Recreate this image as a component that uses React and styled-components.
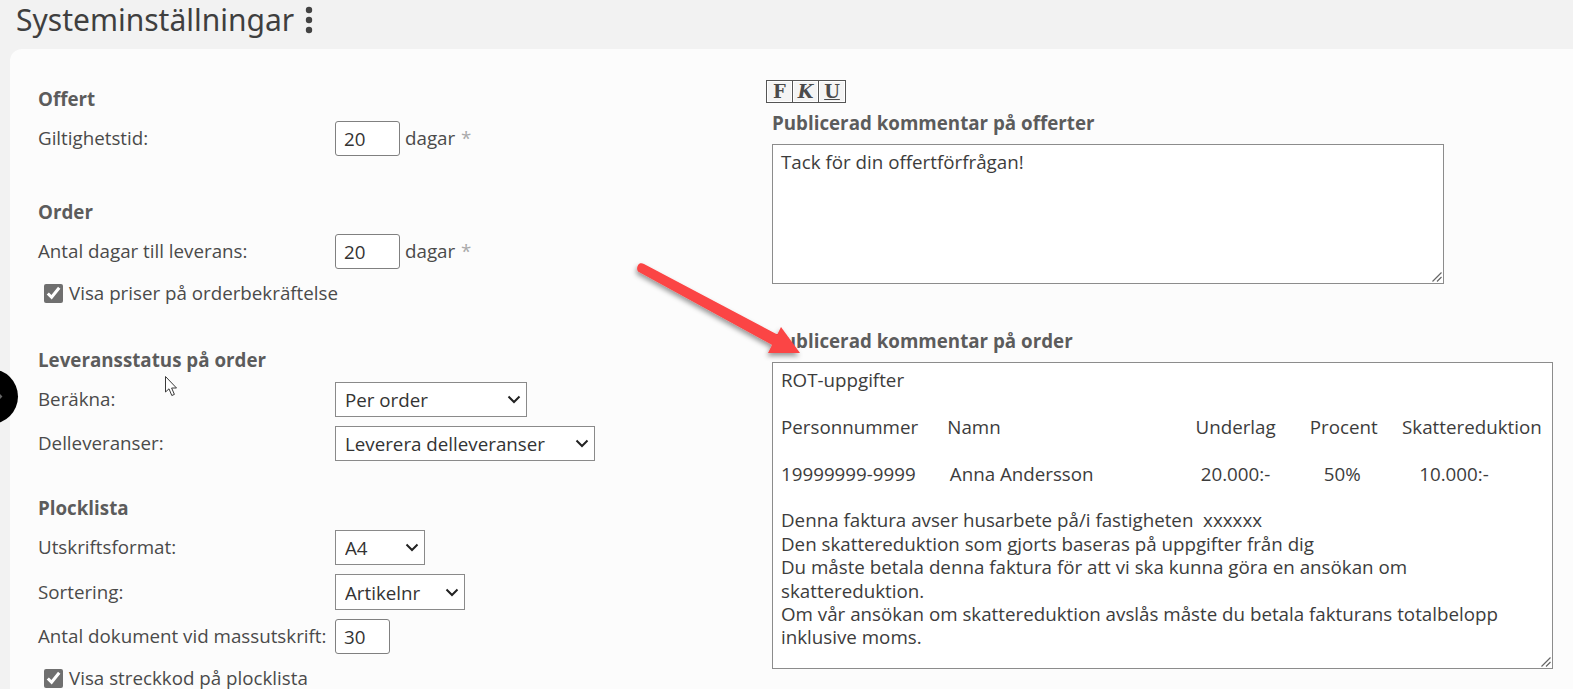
import React from "react";
import styled, { createGlobalStyle } from "styled-components";

const Global = createGlobalStyle`
  html, body { margin: 0; padding: 0; background: #f2f2f2; }
  body { font-family: "Open Sans", "Noto Sans", sans-serif; font-size: 18.75px; color: #444; }
`;

const chevron =
  "url(\"data:image/svg+xml,%3Csvg xmlns='http://www.w3.org/2000/svg' width='14' height='9' viewBox='0 0 14 9'%3E%3Cpath d='M1.5 1.5L7 7l5.5-5.5' fill='none' stroke='%23222' stroke-width='2'/%3E%3C/svg%3E\")";

const grip =
  "url(\"data:image/svg+xml,%3Csvg xmlns='http://www.w3.org/2000/svg' width='15' height='15' viewBox='0 0 15 15'%3E%3Cpath d='M13.5 4.5L4.5 13.5M13.5 9L9 13.5' fill='none' stroke='%23666' stroke-width='1.2'/%3E%3C/svg%3E\")";

const Page = styled.div`
  position: relative;
  width: 1573px;
  height: 689px;
  overflow: hidden;
  background: #f2f2f2;
`;

const Header = styled.header`
  height: 49px;
  display: flex;
  align-items: center;
  gap: 11px;
  padding: 0 0 9px 16px;
  box-sizing: border-box;
`;

const Title = styled.h1`
  margin: 0;
  font-family: "Noto Sans", "Open Sans", sans-serif;
  font-weight: 400;
  font-size: 30px;
  line-height: 38px;
  color: #3f3f3f;
`;

const Card = styled.main`
  margin-left: 10px;
  height: 640px;
  background: #fcfcfc;
  border-radius: 12px 0 0 0;
  display: grid;
  grid-template-columns: 762px 1fr;
`;

const LeftColumn = styled.div`
  padding: 39px 0 0 28px;
`;

const RightColumn = styled.div`
  padding-top: 31px;
  display: flex;
  flex-direction: column;
  align-items: flex-start;
`;

const Section = styled.section`
  margin-top: ${(p) => p.$top || 0}px;
  display: flex;
  flex-direction: column;
  gap: 9px;
`;

const Heading = styled.h2`
  margin: 0 0 1px;
  height: 23px;
  font-size: 18.75px;
  line-height: 21px;
  font-weight: 700;
  color: #5c5c5c;
`;

const Row = styled.div`
  display: grid;
  grid-template-columns: 297px auto;
  align-items: center;
  height: ${(p) => p.$h || 35}px;
`;

const Label = styled.label`
  line-height: 23px;
  padding-bottom: 2px;
  color: #4a4a4a;
  white-space: nowrap;
`;

const Control = styled.div`
  display: flex;
  align-items: center;
  gap: 5px;
`;

const NumberInput = styled.input`
  box-sizing: border-box;
  width: ${(p) => p.$w}px;
  height: 35px;
  padding: 0 0 0 8px;
  border: 1px solid #808080;
  border-radius: 3px;
  background: #fff;
  font: 18.75px "Open Sans", sans-serif;
  color: #333;
  outline: none;
`;

const Unit = styled.span`
  color: #4a4a4a;
  line-height: 23px;
  padding-bottom: 2px;
`;

const Star = styled.span`
  color: #aaa;
  margin-left: 1px;
`;

const Select = styled.select`
  box-sizing: border-box;
  width: ${(p) => p.$w}px;
  height: ${(p) => p.$h || 35}px;
  padding: 0 0 0 9px;
  border: 1px solid #8a8a8a;
  border-radius: 0;
  appearance: none;
  background: #fff ${chevron} no-repeat right 5px center;
  font: 18.75px "Open Sans", sans-serif;
  color: #333;
  outline: none;
`;

const CheckRow = styled.label`
  display: flex;
  align-items: center;
  gap: 6px;
  height: 20px;
  margin: ${(p) => p.$top || 5}px 0 0 6px;
  line-height: 18px;
  color: #4a4a4a;
  white-space: nowrap;
`;

const Check = styled.input`
  width: 19px;
  height: 19px;
  margin: 0;
  accent-color: #6f6f6f;
`;

const Toolbar = styled.div`
  display: flex;
  margin-left: -6px;
  height: 23px;
  border: 1px solid #555;
  box-sizing: border-box;
`;

const ToolButton = styled.span`
  box-sizing: border-box;
  width: 26px;
  height: 21px;
  display: flex;
  align-items: center;
  justify-content: center;
  background: #f4f4f4;
  border-right: ${(p) => (p.$last ? "0" : "1px solid #555")};
  box-shadow: inset 0 0 0 1px #fff;
  font-family: "DejaVu Serif", "Liberation Serif", serif;
  font-size: 18px;
  font-weight: 900;
  font-style: ${(p) => (p.$italic ? "italic" : "normal")};
  text-decoration: ${(p) => (p.$under ? "underline" : "none")};
  color: #4a4a4a;
`;

const FieldLabel = styled.label`
  display: block;
  height: 23px;
  margin: ${(p) => p.$top}px 0 9px;
  font-weight: 700;
  font-size: 18.75px;
  line-height: 21px;
  color: #5c5c5c;
`;

const TextArea = styled.textarea`
  display: block;
  box-sizing: border-box;
  width: ${(p) => p.$w}px;
  height: ${(p) => p.$h}px;
  padding: 5px 8px;
  border: 1px solid #8c8c8c;
  border-radius: 0;
  background: #fff;
  font: 18.75px/23.4px "Open Sans", sans-serif;
  color: #3c3c3c;
  outline: none;
  overflow: hidden;
  resize: both;
  &::-webkit-resizer {
    background: ${grip} no-repeat center;
  }
`;

const Overlay = styled.svg`
  position: absolute;
  left: ${(p) => p.$x}px;
  top: ${(p) => p.$y}px;
  overflow: visible;
  pointer-events: none;
`;

const SideToggle = styled.div`
  position: absolute;
  left: -37px;
  top: 369px;
  width: 55px;
  height: 55px;
  border-radius: 50%;
  background: #000;
`;

const Chevron = styled.span`
  position: absolute;
  left: 31px;
  top: 24px;
  width: 7px;
  height: 7px;
  background: #666;
  transform: rotate(45deg);
`;

const s = (n) => " ".repeat(n);

const orderText = [
  "ROT-uppgifter",
  "",
  `Personnummer${s(6)}Namn${s(40)}Underlag${s(7)}Procent${s(5)}Skattereduktion`,
  "",
  `19999999-9999${s(7)}Anna Andersson${s(22)}20.000:-${s(11)}50%${s(12)}10.000:-`,
  "",
  "Denna faktura avser husarbete på/i fastigheten  xxxxxx",
  "Den skattereduktion som gjorts baseras på uppgifter från dig",
  "Du måste betala denna faktura för att vi ska kunna göra en ansökan om skattereduktion.",
  "Om vår ansökan om skattereduktion avslås måste du betala fakturans totalbelopp inklusive moms.",
].join("\n");

export default function App() {
  return (
    <Page>
      <Global />
      <Header>
        <Title>Systeminställningar</Title>
        <svg width="8" height="28" viewBox="0 0 8 28" aria-hidden="true">
          <circle cx="4" cy="4" r="3.2" fill="#444" />
          <circle cx="4" cy="14" r="3.2" fill="#444" />
          <circle cx="4" cy="24" r="3.2" fill="#444" />
        </svg>
      </Header>
      <Card>
        <LeftColumn>
          <Section>
            <Heading>Offert</Heading>
            <Row>
              <Label>Giltighetstid:</Label>
              <Control>
                <NumberInput $w={65} defaultValue="20" />
                <Unit>dagar <Star>*</Star></Unit>
              </Control>
            </Row>
          </Section>
          <Section $top={45}>
            <Heading>Order</Heading>
            <Row>
              <Label>Antal dagar till leverans:</Label>
              <Control>
                <NumberInput $w={65} defaultValue="20" />
                <Unit>dagar <Star>*</Star></Unit>
              </Control>
            </Row>
            <CheckRow>
              <Check type="checkbox" defaultChecked />
              Visa priser på orderbekräftelse
            </CheckRow>
          </Section>
          <Section $top={46}>
            <Heading>Leveransstatus på order</Heading>
            <Row>
              <Label>Beräkna:</Label>
              <Select $w={192}><option>Per order</option></Select>
            </Row>
            <Row>
              <Label>Delleveranser:</Label>
              <Select $w={260}><option>Leverera delleveranser</option></Select>
            </Row>
          </Section>
          <Section $top={36}>
            <Heading>Plocklista</Heading>
            <Row>
              <Label>Utskriftsformat:</Label>
              <Select $w={90}><option>A4</option></Select>
            </Row>
            <Row $h={36}>
              <Label>Sortering:</Label>
              <Select $w={130} $h={36}><option>Artikelnr</option></Select>
            </Row>
            <Row>
              <Label>Antal dokument vid massutskrift:</Label>
              <NumberInput $w={55} defaultValue="30" />
            </Row>
            <CheckRow>
              <Check type="checkbox" defaultChecked />
              Visa streckkod på plocklista
            </CheckRow>
          </Section>
        </LeftColumn>
        <RightColumn>
          <Toolbar>
            <ToolButton>F</ToolButton>
            <ToolButton $italic>K</ToolButton>
            <ToolButton $under $last>U</ToolButton>
          </Toolbar>
          <FieldLabel $top={9}>Publicerad kommentar på offerter</FieldLabel>
          <TextArea $w={672} $h={140} defaultValue="Tack för din offertförfrågan!" />
          <FieldLabel $top={46}>Publicerad kommentar på order</FieldLabel>
          <TextArea $w={781} $h={307} defaultValue={orderText} />
        </RightColumn>
      </Card>

      <SideToggle><Chevron /></SideToggle>

      <Overlay $x={165} $y={376} width="14" height="21" viewBox="0 0 14 21" aria-hidden="true">
        <path d="M0.5 0.5V16L4 12.8L6.8 19.5L9.4 18.4L6.6 12H11.5Z" fill="#fff" stroke="#3a3a3a" strokeWidth="1" />
      </Overlay>

      <Overlay $x={630} $y={258} width="180" height="105" viewBox="0 0 180 105" aria-hidden="true">
        <defs>
          <filter id="arrowShadow" x="-20%" y="-20%" width="140%" height="150%">
            <feDropShadow dx="-1" dy="3" stdDeviation="2.5" floodColor="#000" floodOpacity="0.4" />
          </filter>
        </defs>
        <g filter="url(#arrowShadow)" fill="#fb4444">
          <path d="M8.5 6.5 C9.5 5 12 4.8 14 6 L152 79 L146 89 L8 13.5 C6.5 11.5 7 8.5 8.5 6.5Z" />
          <path d="M151 69 L138 95 L170 95 Z" />
        </g>
      </Overlay>
    </Page>
  );
}
